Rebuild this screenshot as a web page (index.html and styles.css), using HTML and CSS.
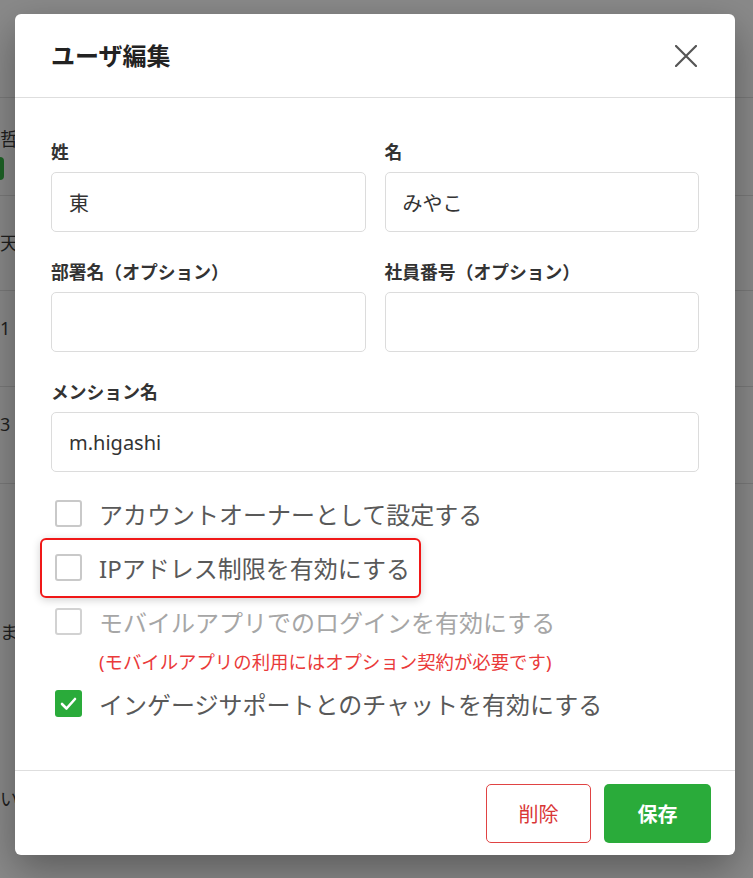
FILE: index.html
```html
<!DOCTYPE html>
<html lang="ja">
<head>
<meta charset="utf-8">
<title>ユーザ編集</title>
<link rel="stylesheet" href="styles.css">
</head>
<body>
<div class="page">
  <div class="page-top"></div>
  <div class="page-row row-a"><span class="bg-text">哲也</span><span class="bg-tag"></span></div>
  <div class="page-row row-b"><span class="bg-text">天野</span></div>
  <div class="page-row row-c"><span class="bg-text raised">1 (</span></div>
  <div class="page-row row-d"><span class="bg-text raised">3 (</span></div>
  <div class="page-rest">
    <span class="bg-text bg-ma">ます</span>
    <span class="bg-text bg-i">いい</span>
  </div>
</div>

<div class="modal">
  <div class="modal-header">
    <h1 class="modal-title">ユーザ編集</h1>
    <svg class="close" width="22" height="22" viewBox="0 0 22 22" aria-label="閉じる">
      <path d="M1 1 L21 21 M21 1 L1 21" stroke="#555" stroke-width="2.2" stroke-linecap="round" fill="none"/>
    </svg>
  </div>
  <div class="modal-body">
    <div class="grid">
      <div class="field">
        <label class="label">姓</label>
        <div class="input">東</div>
      </div>
      <div class="field">
        <label class="label">名</label>
        <div class="input">みやこ</div>
      </div>
      <div class="field">
        <label class="label">部署名（オプション）</label>
        <div class="input"></div>
      </div>
      <div class="field">
        <label class="label">社員番号（オプション）</label>
        <div class="input"></div>
      </div>
      <div class="field wide">
        <label class="label">メンション名</label>
        <div class="input">m.higashi</div>
      </div>
    </div>

    <div class="checks">
      <div class="check-row"><span class="box"></span><span>アカウントオーナーとして設定する</span></div>
      <div class="check-row highlight"><span class="box"></span><span>IPアドレス制限を有効にする</span></div>
      <div class="check-row disabled"><span class="box"></span><span>モバイルアプリでのログインを有効にする</span></div>
      <div class="note">(モバイルアプリの利用にはオプション契約が必要です)</div>
      <div class="check-row"><span class="box checked"><svg width="27" height="27" viewBox="0 0 27 27"><path d="M7 14 L11.5 18.5 L20 9" stroke="#fff" stroke-width="2.6" fill="none" stroke-linecap="round" stroke-linejoin="round"/></svg></span><span>インゲージサポートとのチャットを有効にする</span></div>
    </div>
  </div>
  <div class="modal-footer">
    <button class="btn btn-delete">削除</button>
    <button class="btn btn-save">保存</button>
  </div>
</div>
</body>
</html>
```

FILE: styles.css
```css
html, body {
  margin: 0;
  padding: 0;
}
body {
  width: 753px;
  height: 878px;
  overflow: hidden;
  background: #8a8a8a;
  font-family: "Noto Sans", "Noto Sans CJK JP", sans-serif;
  position: relative;
}

/* background page behind the overlay */
.page {
  width: 753px;
}
.page-top {
  height: 97px;
  border-bottom: 1px solid #7a7a7a;
}
.page-row {
  box-sizing: border-box;
  border-bottom: 1px solid #7a7a7a;
  display: flex;
  flex-direction: column;
  justify-content: center;
  gap: 6px;
}
.row-a { height: 98px; }
.row-b { height: 95px; }
.row-c { height: 96px; }
.row-d { height: 97px; }
.bg-text {
  display: block;
  margin-left: 0;
  font-size: 18px;
  line-height: 24px;
  color: #1f1f1f;
  white-space: nowrap;
}
.row-a .bg-text { margin-top: 14px; }
.bg-text.raised { margin-bottom: 22px; }
.bg-tag {
  display: block;
  width: 18px;
  height: 23px;
  margin-left: -14px;
  border-radius: 4px;
  background: #1d6326;
}
.page-rest {
  display: flex;
  flex-direction: column;
}
.bg-ma { margin-top: 136px; }
.bg-i { margin-top: 143px; }

/* modal */
.modal {
  position: absolute;
  left: 15px;
  top: 14px;
  width: 720px;
  background: #fff;
  border-radius: 6px;
  box-shadow: 0 14px 40px rgba(0, 0, 0, 0.35);
}
.modal-header {
  height: 84px;
  box-sizing: border-box;
  border-bottom: 1px solid #dedede;
  display: flex;
  align-items: center;
  justify-content: space-between;
  padding: 0 38px 0 36px;
}
.modal-title {
  margin: 0;
  font-size: 24px;
  font-weight: 700;
  color: #222;
  line-height: 30px;
}
.close {
  display: block;
}
.modal-body {
  padding: 42px 36px 40px;
}
.grid {
  display: grid;
  grid-template-columns: 1fr 1fr;
  column-gap: 19px;
  row-gap: 28px;
}
.wide {
  grid-column: 1 / -1;
}
.label {
  display: block;
  font-size: 17.8px;
  font-weight: 700;
  line-height: 24px;
  margin-bottom: 8px;
  color: #333;
}
.input {
  height: 60px;
  box-sizing: border-box;
  border: 1px solid #dcdcdc;
  border-radius: 5px;
  padding: 0 17px;
  display: flex;
  align-items: center;
  font-size: 20px;
  color: #333;
}
.checks {
  margin-top: 14px;
}
.check-row {
  position: relative;
  height: 54px;
  display: flex;
  align-items: center;
  gap: 17px;
  padding-left: 4px;
  font-size: 24px;
  color: #595959;
  white-space: nowrap;
}
.check-row.disabled {
  color: #a6a6a6;
}
.box {
  flex: none;
  width: 27px;
  height: 27px;
  box-sizing: border-box;
  border: 2px solid #c9c9c9;
  border-radius: 3px;
  display: flex;
  align-items: center;
  justify-content: center;
}
.check-row.disabled .box {
  border-color: #d2d2d2;
}
.box.checked {
  border: none;
  background: #2aab3a;
}
.box.checked svg {
  display: block;
}
.highlight::after {
  content: "";
  position: absolute;
  left: -11px;
  top: -2px;
  width: 381px;
  height: 60px;
  box-sizing: border-box;
  border: 2px solid #f01818;
  border-radius: 6px;
  box-shadow: 0 2px 8px rgba(0, 0, 0, 0.18);
  pointer-events: none;
}
.note {
  padding-left: 48px;
  font-size: 18.4px;
  line-height: 28px;
  color: #ea3a3a;
  white-space: nowrap;
}
.modal-footer {
  height: 85px;
  box-sizing: border-box;
  border-top: 1px solid #dedede;
  display: flex;
  justify-content: flex-end;
  align-items: center;
  gap: 13px;
  padding-right: 24px;
}
.btn {
  height: 59px;
  border-radius: 5px;
  font-family: "Noto Sans", "Noto Sans CJK JP", sans-serif;
  font-size: 20px;
  cursor: pointer;
  padding: 0;
}
.btn-delete {
  width: 105px;
  background: #fff;
  border: 1px solid #e04343;
  color: #d93636;
}
.btn-save {
  width: 107px;
  background: #2aab3a;
  border: none;
  color: #fff;
  font-weight: 700;
}
```
